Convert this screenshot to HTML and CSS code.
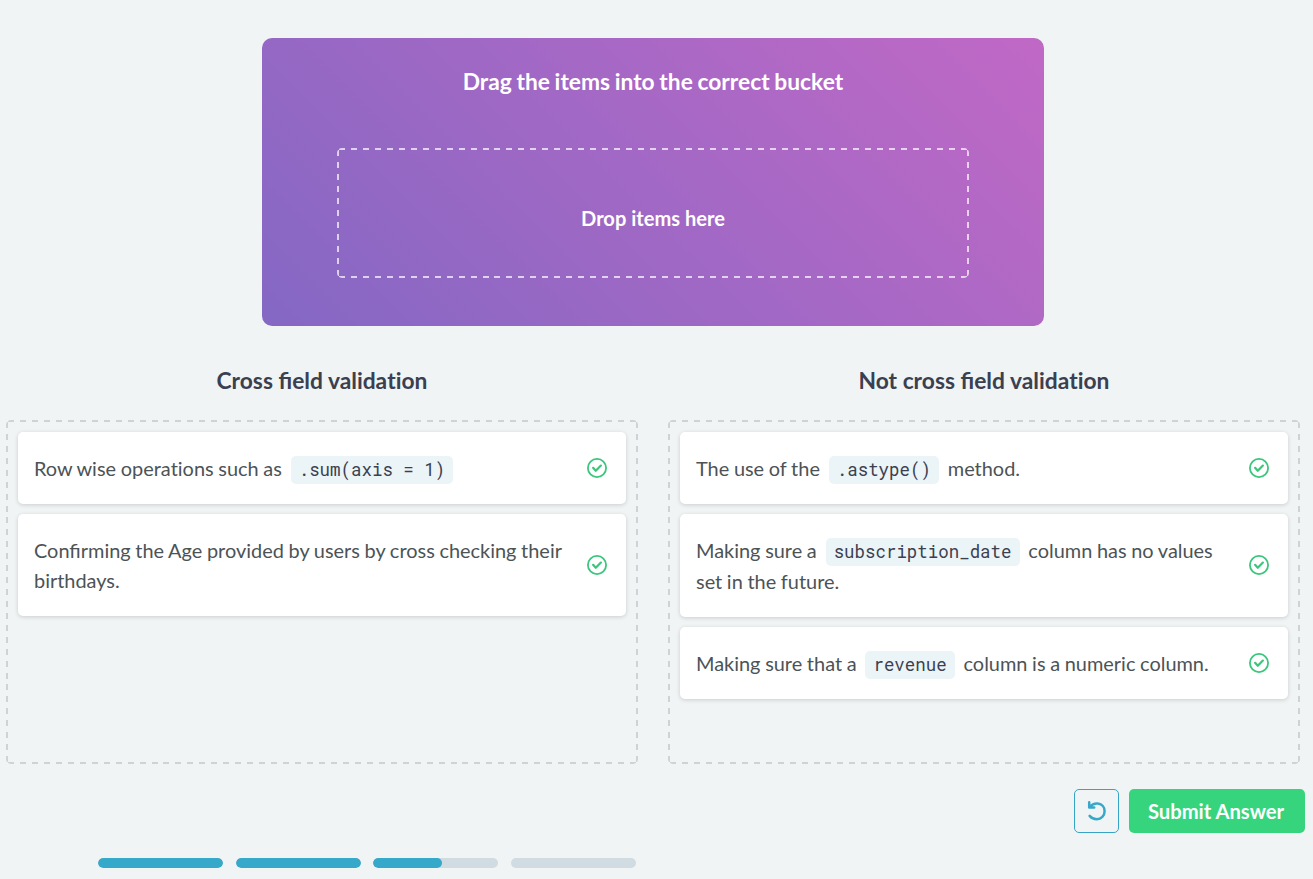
FILE: index.html
```html
<!DOCTYPE html>
<html lang="en">
<head>
<meta charset="utf-8">
<title>Drag the items into the correct bucket</title>
<link rel="stylesheet" href="styles.css">
</head>
<body>
<svg class="symbols" aria-hidden="true">
  <symbol id="check" viewBox="0 0 20 20">
    <circle cx="10" cy="10" r="9.1" fill="none" stroke="currentColor" stroke-width="1.8"/>
    <path d="M6.1 9.8 8.8 12.8 13.9 7.6" fill="none" stroke="currentColor" stroke-width="2.2" stroke-linecap="round" stroke-linejoin="round"/>
  </symbol>
</svg>
<main class="exercise">
  <section class="source">
    <h1 class="title">Drag the items into the correct bucket</h1>
    <div class="drop dashed">Drop items here</div>
  </section>
  <div class="buckets">
    <section class="bucket">
      <h2 class="title">Cross field valida<span class="plain">ti</span>on</h2>
      <div class="list dashed">
        <article class="card"><p>Row wise opera<span class="plain">ti</span>ons such as <code>.sum(axis = 1)</code></p><svg class="check"><use href="#check"/></svg></article>
        <article class="card"><p>Confirming the Age provided by users by cross checking their birthdays.</p><svg class="check"><use href="#check"/></svg></article>
      </div>
    </section>
    <section class="bucket">
      <h2 class="title">Not cross field valida<span class="plain">ti</span>on</h2>
      <div class="list dashed">
        <article class="card"><p>The use of the <code>.astype()</code> method.</p><svg class="check"><use href="#check"/></svg></article>
        <article class="card tall"><p>Making sure a <code>subscription_date</code> column has no values set in the future.</p><svg class="check"><use href="#check"/></svg></article>
        <article class="card"><p>Making sure that a <code>revenue</code> column is a numeric column.</p><svg class="check"><use href="#check"/></svg></article>
      </div>
    </section>
  </div>
  <div class="actions">
    <button class="reset" aria-label="Reset">
      <svg viewBox="0 0 20 22" width="20" height="22"><path d="M2.2 2.3V7.4H7.2M2.8 7.1C5 4.4 8 3.1 11 3.6C15 4.1 17.6 7.4 17.6 11.2C17.6 15.8 14.2 19.2 9.8 19.2C6.8 19.2 4.3 17.9 2.6 15.9" fill="none" stroke="currentColor" stroke-width="2.5" stroke-linecap="round" stroke-linejoin="round"/></svg>
    </button>
    <button class="submit">Submit Answer</button>
  </div>
  <div class="progress">
    <div class="step"><span style="width:100%"></span></div>
    <div class="step"><span style="width:100%"></span></div>
    <div class="step"><span style="width:55%"></span></div>
    <div class="step"></div>
  </div>
</main>
</body>
</html>
```
FILE: styles.css
```css
* { box-sizing: border-box; }
body {
  margin: 0;
  background: #f0f4f5;
  color: #4c5356;
  font: 20px/30px Lato, "Liberation Sans", sans-serif;
  overflow: hidden;
}
.symbols { display: none; }
.exercise { padding: 38px 8px 0 6px; height: 879px; }
.title {
  margin: 0;
  padding-bottom: 2px;
  font-size: 22.8px;
  line-height: 26px;
  font-weight: 700;
  text-align: center;
}
.source .title { word-spacing: -.9px; }
.plain { font-variant-ligatures: none; }
.source {
  width: 782px;
  height: 288px;
  margin-left: 256px;
  padding: 30px 75px 0;
  border-radius: 10px;
  background: linear-gradient(45deg, #8468c4, #c168c6);
  color: #fff;
}
/* Evenly spaced dashes along the four edges */
.dashed {
  --h: repeating-linear-gradient(90deg, transparent 0 2px, var(--dash) 2px 8px, transparent 8px 11.96px);
  --v: repeating-linear-gradient(180deg, transparent 0 2px, var(--dash) 2px 8px, transparent 8px var(--period));
  background:
    var(--h) 0 0 / 100% 2px no-repeat,
    var(--h) 0 100% / 100% 2px no-repeat,
    var(--v) 0 0 / 2px 100% no-repeat,
    var(--v) 100% 0 / 2px 100% no-repeat;
  border-radius: 5px;
}
.drop {
  --dash: rgba(255, 255, 255, .7);
  --period: 12px;
  height: 130px;
  margin-top: 52px;
  padding-top: 10px;
  display: flex;
  align-items: center;
  justify-content: center;
  font-size: 20.1px;
  font-weight: 700;
}
.buckets {
  display: grid;
  grid-template-columns: 632px 632px;
  gap: 30px;
  margin-top: 41px;
}
.bucket .title { color: #3b4050; }
.list {
  --dash: #d0d3d5;
  --period: 11.93px;
  display: flex;
  flex-direction: column;
  gap: 10px;
  height: 344px;
  margin-top: 25px;
  padding: 12px;
}
.card {
  display: flex;
  align-items: center;
  justify-content: space-between;
  height: 72px;
  padding: 0 19px 0 16px;
  border-radius: 5px;
  background: #fff;
  box-shadow: 0 1px 4px rgba(0, 0, 0, .16);
}
.card:nth-child(2) { height: 102px; }
.card.tall { height: 103px; line-height: 31px; }
.card p { margin: 0; width: 540px; font-size: 19.93px; word-spacing: -.45px; }
code {
  display: inline-block;
  margin: 0 4.2px;
  padding: 0 8px;
  height: 28px;
  border-radius: 5px;
  background: #ebf4f7;
  color: #3b4050;
  font: 17.45px/28px "Roboto Mono", "DejaVu Sans Mono", monospace;
  word-spacing: 0;
  white-space: pre;
}
.check { flex: none; width: 20px; height: 20px; margin-top: -1px; color: #3bc67d; }
.actions { display: flex; justify-content: flex-end; gap: 10px; margin-top: 25px; }
.actions button { height: 44px; border-radius: 5px; font: inherit; }
.reset {
  display: flex;
  align-items: center;
  justify-content: center;
  width: 45px;
  padding: 0;
  border: 1px solid #36a5c5;
  background: transparent;
  color: #38a8c9;
}
.submit { width: 176px; padding: 0 2px 1px 0; border: 0; background: #36d57d; color: #fff; }
.actions .submit { font-weight: 700; font-size: 20.2px; }
.progress { display: flex; gap: 12.7px; margin: 25px 0 0 92px; }
.step { width: 125px; height: 10px; border-radius: 5px; background: #d0dbe2; overflow: hidden; }
.step span { display: block; height: 100%; border-radius: 5px; background: #36a8c9; }
```
